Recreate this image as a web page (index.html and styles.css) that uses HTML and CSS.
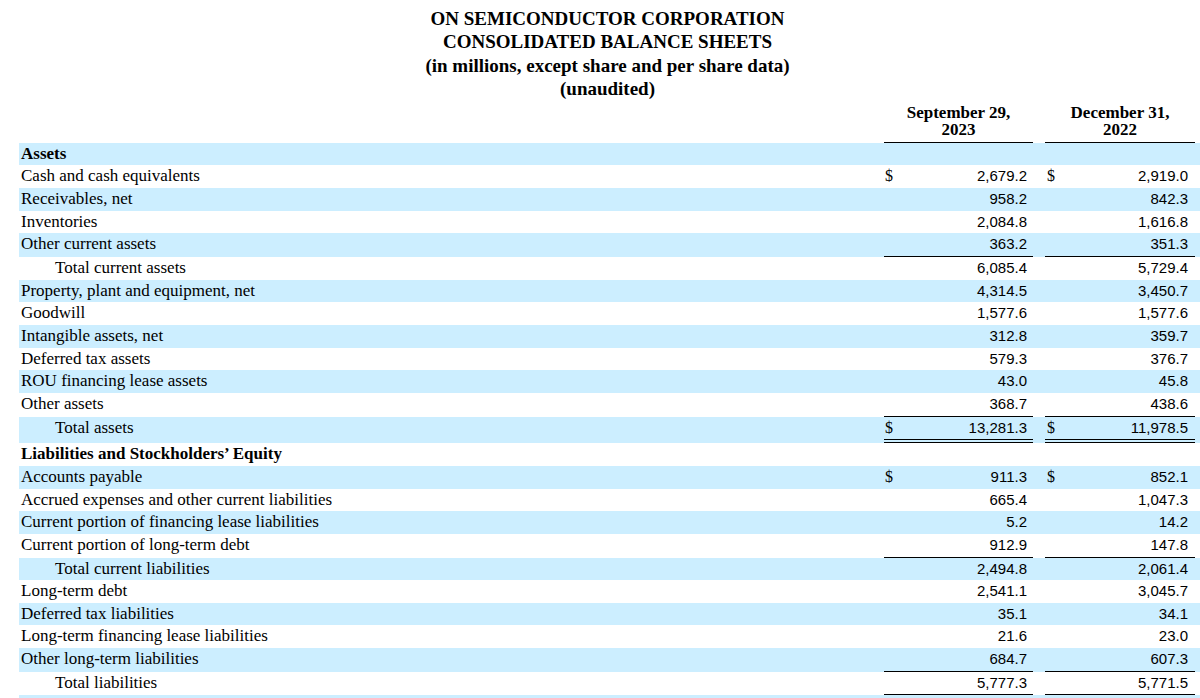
FILE: index.html
```html
<!DOCTYPE html>
<html lang="en">
<head>
<meta charset="utf-8">
<title>ON Semiconductor Consolidated Balance Sheets</title>
<link rel="stylesheet" href="styles.css">
</head>
<body>
<div class="page">
  <div class="title">
    <div>ON SEMICONDUCTOR CORPORATION</div>
    <div>CONSOLIDATED BALANCE SHEETS</div>
    <div>(in millions, except share and per share data)</div>
    <div>(unaudited)</div>
  </div>
  <table class="bs">
    <colgroup>
      <col class="w-label"><col class="w-gap1"><col class="w-c1"><col class="w-gap2"><col class="w-c2"><col class="w-tail">
    </colgroup>
    <thead>
      <tr>
        <th></th><th></th>
        <th class="colhead">September 29,<br>2023</th>
        <th></th>
        <th class="colhead">December 31,<br>2022</th>
        <th></th>
      </tr>
    </thead>
    <tbody>
      <tr class="blue"><td class="lbl bold">Assets</td><td></td><td></td><td></td><td></td><td></td></tr>
      <tr><td class="lbl">Cash and cash equivalents</td><td></td><td class="c1"><div class="v"><span class="cur">$</span><span class="num">2,679.2</span></div></td><td></td><td class="c2"><div class="v"><span class="cur">$</span><span class="num">2,919.0</span></div></td><td></td></tr>
      <tr class="blue"><td class="lbl">Receivables, net</td><td></td><td class="c1"><div class="v"><span class="cur"></span><span class="num">958.2</span></div></td><td></td><td class="c2"><div class="v"><span class="cur"></span><span class="num">842.3</span></div></td><td></td></tr>
      <tr><td class="lbl">Inventories</td><td></td><td class="c1"><div class="v"><span class="cur"></span><span class="num">2,084.8</span></div></td><td></td><td class="c2"><div class="v"><span class="cur"></span><span class="num">1,616.8</span></div></td><td></td></tr>
      <tr class="blue"><td class="lbl">Other current assets</td><td></td><td class="c1 ul"><div class="v"><span class="cur"></span><span class="num">363.2</span></div></td><td></td><td class="c2 ul"><div class="v"><span class="cur"></span><span class="num">351.3</span></div></td><td></td></tr>
      <tr><td class="lbl indent">Total current assets</td><td></td><td class="c1"><div class="v"><span class="cur"></span><span class="num">6,085.4</span></div></td><td></td><td class="c2"><div class="v"><span class="cur"></span><span class="num">5,729.4</span></div></td><td></td></tr>
      <tr class="blue"><td class="lbl">Property, plant and equipment, net</td><td></td><td class="c1"><div class="v"><span class="cur"></span><span class="num">4,314.5</span></div></td><td></td><td class="c2"><div class="v"><span class="cur"></span><span class="num">3,450.7</span></div></td><td></td></tr>
      <tr><td class="lbl">Goodwill</td><td></td><td class="c1"><div class="v"><span class="cur"></span><span class="num">1,577.6</span></div></td><td></td><td class="c2"><div class="v"><span class="cur"></span><span class="num">1,577.6</span></div></td><td></td></tr>
      <tr class="blue"><td class="lbl">Intangible assets, net</td><td></td><td class="c1"><div class="v"><span class="cur"></span><span class="num">312.8</span></div></td><td></td><td class="c2"><div class="v"><span class="cur"></span><span class="num">359.7</span></div></td><td></td></tr>
      <tr><td class="lbl">Deferred tax assets</td><td></td><td class="c1"><div class="v"><span class="cur"></span><span class="num">579.3</span></div></td><td></td><td class="c2"><div class="v"><span class="cur"></span><span class="num">376.7</span></div></td><td></td></tr>
      <tr class="blue"><td class="lbl">ROU financing lease assets</td><td></td><td class="c1"><div class="v"><span class="cur"></span><span class="num">43.0</span></div></td><td></td><td class="c2"><div class="v"><span class="cur"></span><span class="num">45.8</span></div></td><td></td></tr>
      <tr><td class="lbl">Other assets</td><td></td><td class="c1 ul"><div class="v"><span class="cur"></span><span class="num">368.7</span></div></td><td></td><td class="c2 ul"><div class="v"><span class="cur"></span><span class="num">438.6</span></div></td><td></td></tr>
      <tr class="blue"><td class="lbl indent">Total assets</td><td></td><td class="c1 dul"><div class="v"><span class="cur">$</span><span class="num">13,281.3</span></div></td><td></td><td class="c2 dul"><div class="v"><span class="cur">$</span><span class="num">11,978.5</span></div></td><td></td></tr>
      <tr><td class="lbl bold">Liabilities and Stockholders’ Equity</td><td></td><td></td><td></td><td></td><td></td></tr>
      <tr class="blue"><td class="lbl">Accounts payable</td><td></td><td class="c1"><div class="v"><span class="cur">$</span><span class="num">911.3</span></div></td><td></td><td class="c2"><div class="v"><span class="cur">$</span><span class="num">852.1</span></div></td><td></td></tr>
      <tr><td class="lbl">Accrued expenses and other current liabilities</td><td></td><td class="c1"><div class="v"><span class="cur"></span><span class="num">665.4</span></div></td><td></td><td class="c2"><div class="v"><span class="cur"></span><span class="num">1,047.3</span></div></td><td></td></tr>
      <tr class="blue"><td class="lbl">Current portion of financing lease liabilities</td><td></td><td class="c1"><div class="v"><span class="cur"></span><span class="num">5.2</span></div></td><td></td><td class="c2"><div class="v"><span class="cur"></span><span class="num">14.2</span></div></td><td></td></tr>
      <tr><td class="lbl">Current portion of long-term debt</td><td></td><td class="c1 ul"><div class="v"><span class="cur"></span><span class="num">912.9</span></div></td><td></td><td class="c2 ul"><div class="v"><span class="cur"></span><span class="num">147.8</span></div></td><td></td></tr>
      <tr class="blue"><td class="lbl indent">Total current liabilities</td><td></td><td class="c1"><div class="v"><span class="cur"></span><span class="num">2,494.8</span></div></td><td></td><td class="c2"><div class="v"><span class="cur"></span><span class="num">2,061.4</span></div></td><td></td></tr>
      <tr><td class="lbl">Long-term debt</td><td></td><td class="c1"><div class="v"><span class="cur"></span><span class="num">2,541.1</span></div></td><td></td><td class="c2"><div class="v"><span class="cur"></span><span class="num">3,045.7</span></div></td><td></td></tr>
      <tr class="blue"><td class="lbl">Deferred tax liabilities</td><td></td><td class="c1"><div class="v"><span class="cur"></span><span class="num">35.1</span></div></td><td></td><td class="c2"><div class="v"><span class="cur"></span><span class="num">34.1</span></div></td><td></td></tr>
      <tr><td class="lbl">Long-term financing lease liabilities</td><td></td><td class="c1"><div class="v"><span class="cur"></span><span class="num">21.6</span></div></td><td></td><td class="c2"><div class="v"><span class="cur"></span><span class="num">23.0</span></div></td><td></td></tr>
      <tr class="blue"><td class="lbl">Other long-term liabilities</td><td></td><td class="c1 ul"><div class="v"><span class="cur"></span><span class="num">684.7</span></div></td><td></td><td class="c2 ul"><div class="v"><span class="cur"></span><span class="num">607.3</span></div></td><td></td></tr>
      <tr><td class="lbl indent">Total liabilities</td><td></td><td class="c1 ul"><div class="v"><span class="cur"></span><span class="num">5,777.3</span></div></td><td></td><td class="c2 ul"><div class="v"><span class="cur"></span><span class="num">5,771.5</span></div></td><td></td></tr>
      <tr class="blue"><td class="lbl"></td><td></td><td></td><td></td><td></td><td></td></tr>
    </tbody>
  </table>
</div>
</body>
</html>
```

FILE: styles.css
```css
html, body {
  margin: 0;
  padding: 0;
  background: #ffffff;
  color: #000000;
}

.page {
  padding: 7px 0 0 19px;
  font-family: "Liberation Serif", "Times New Roman", serif;
}

.title {
  width: 1177px;
  text-align: center;
  font-weight: bold;
  font-size: 19px;
  line-height: 23.3px;
}

.bs {
  width: 1181px;
  table-layout: fixed;
  border-collapse: separate;
  border-spacing: 0;
  font-size: 17px;
}

.w-label { width: 859px; }
.w-gap1 { width: 6px; }
.w-c1 { width: 149px; }
.w-gap2 { width: 12px; }
.w-c2 { width: 150px; }
.w-tail { width: 5px; }

.bs th,
.bs td {
  padding: 0;
}

.bs th.colhead {
  font-weight: bold;
  font-size: 17px;
  line-height: 17px;
  text-align: center;
  padding: 4.2px 0 3.4px 0;
  border-bottom: 1px solid #000;
}

.bs td {
  height: 22.65px;
  line-height: 22.65px;
  vertical-align: top;
  white-space: nowrap;
}

.bs tr.blue td {
  background: #cceeff;
}

.lbl {
  padding-left: 2px !important;
  text-align: left;
}

.lbl.indent {
  padding-left: 36px !important;
}

.bold {
  font-weight: bold;
}

.v {
  display: flex;
  justify-content: space-between;
  align-items: baseline;
  height: 22.65px;
}

.c1 .v {
  padding: 0 6px 0 1px;
}

.c2 .v {
  padding: 0 7px 0 2px;
}

.cur {
  font-family: "Liberation Serif", "Times New Roman", serif;
  font-size: 16px;
}

.num {
  font-family: "Liberation Sans", Arial, sans-serif;
  font-size: 15px;
}

.bs td.ul {
  border-bottom: 1px solid #000;
}

.bs td.dul {
  border-bottom: 4px double #000;
}
```
